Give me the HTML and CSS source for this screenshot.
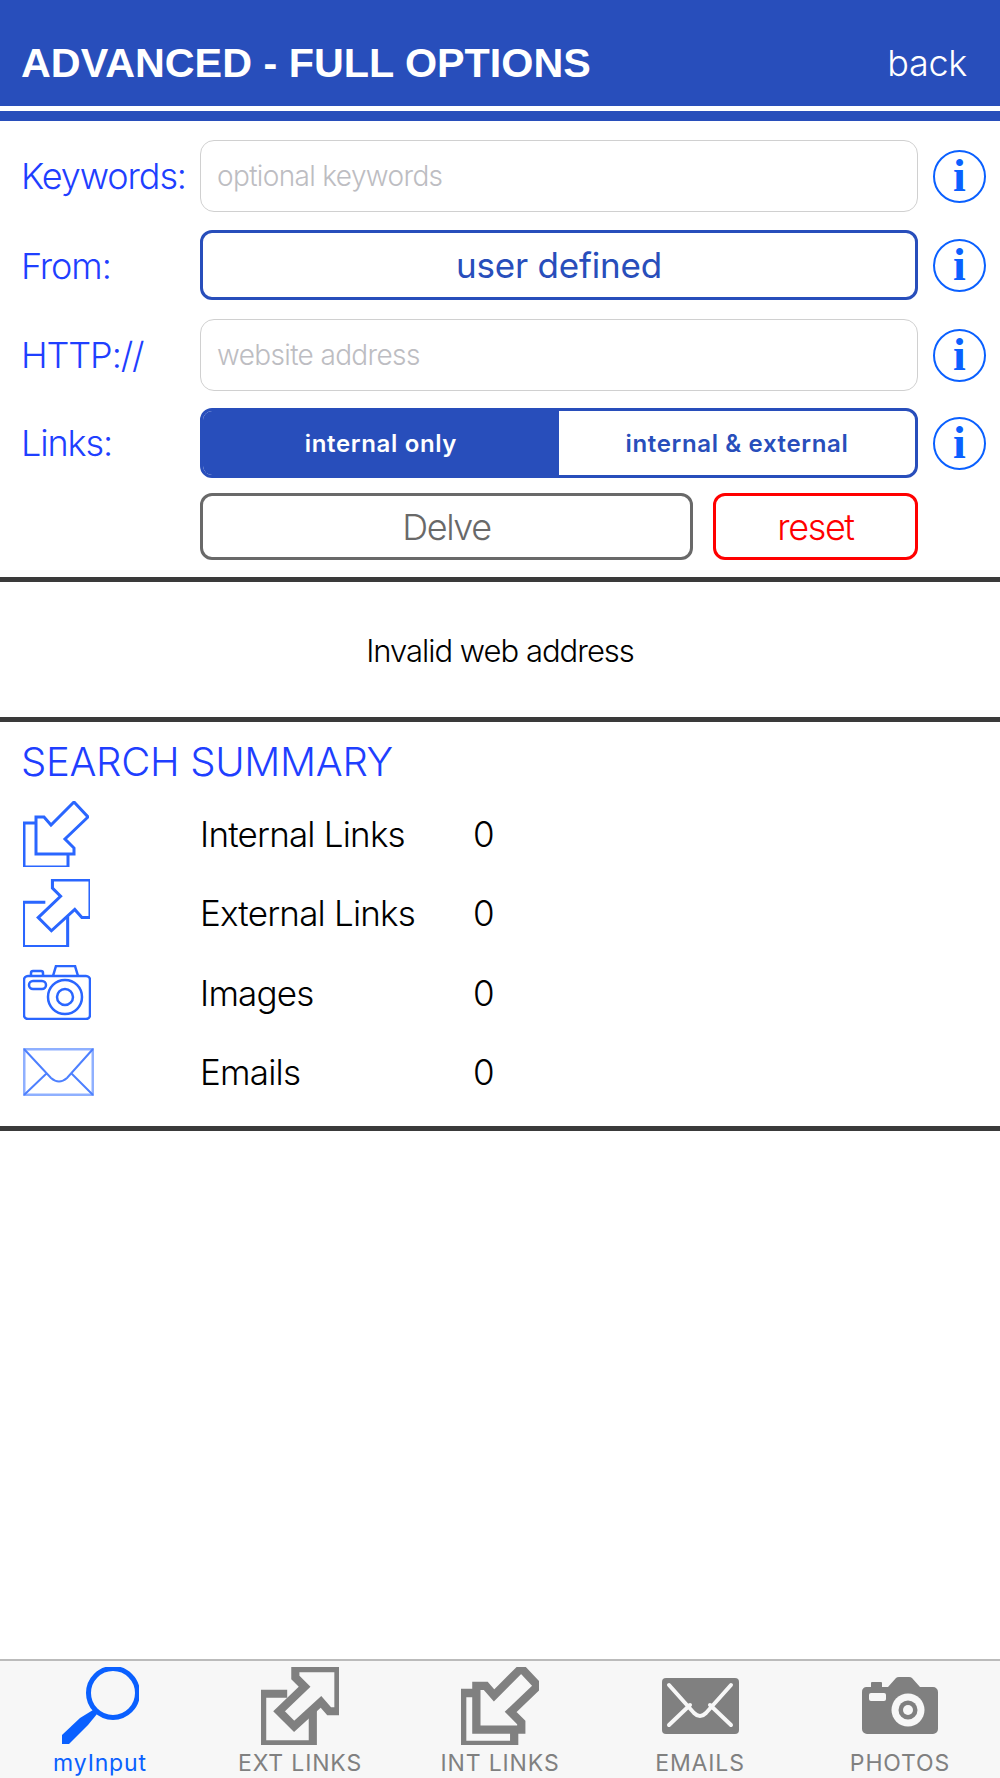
FILE: index.html
```html
<!DOCTYPE html>
<html lang="en">
<head>
  <meta charset="UTF-8">
  <meta name="viewport" content="width=device-width, initial-scale=1.0">
  <title>Advanced - Full Options</title>
  <link rel="stylesheet" href="styles.css">
</head>
<body>
  <svg class="defs" width="0" height="0">
    <symbol id="int-arrow" viewBox="0 0 66 66">
      <path d="M51 1 L65 16 L42 38 L51 47 L51 53 L13 53 L13 16 L21 16 L28 24 Z"/>
      <path d="M13 22 L1 22 L1 66 L45 66 L45 53"/>
    </symbol>
    <symbol id="ext-arrow" viewBox="0 0 66 67">
      <path d="M29 1 L66 1 L66 38 L58 38 L51 30 L28 51 L15 38 L37 17 L29 9 Z"/>
      <path d="M22 23 L0.5 23 L0.5 66.5 L44 66.5 L44 37"/>
    </symbol>
  </svg>

  <header class="topbar">
    <h1>ADVANCED - FULL OPTIONS</h1>
    <span class="back">back</span>
  </header>
  <div class="topbar-line"></div>

  <section class="form">
    <div class="row row-input">
      <label>Keywords:</label>
      <input type="text" class="field field-big" placeholder="optional keywords">
      <span class="info">i</span>
    </div>
    <div class="row row-from">
      <label>From:</label>
      <div class="select">user defined</div>
      <span class="info">i</span>
    </div>
    <div class="row row-input row-http">
      <label>HTTP://</label>
      <input type="text" class="field" placeholder="website address">
      <span class="info">i</span>
    </div>
    <div class="row row-links">
      <label>Links:</label>
      <div class="segment">
        <div class="seg seg-on">internal only</div>
        <div class="seg">internal &amp; external</div>
      </div>
      <span class="info">i</span>
    </div>
    <div class="row row-actions">
      <label></label>
      <div class="actions">
        <div class="btn btn-delve">Delve</div>
        <div class="btn btn-reset">reset</div>
      </div>
    </div>
  </section>

  <section class="message">Invalid web address</section>

  <section class="summary">
    <h2>SEARCH SUMMARY</h2>
    <div class="stat">
      <div class="stat-icon"><svg class="line-icon" width="66" height="66"><use href="#int-arrow"/></svg></div>
      <span class="stat-name">Internal Links</span>
      <span>0</span>
    </div>
    <div class="stat">
      <div class="stat-icon"><svg class="line-icon" width="67" height="68"><use href="#ext-arrow"/></svg></div>
      <span class="stat-name">External Links</span>
      <span>0</span>
    </div>
    <div class="stat">
      <div class="stat-icon">
        <svg class="line-icon thin" width="68" height="55" viewBox="0 0 68 55">
          <path d="M5 11 H63 a4 4 0 0 1 4 4 V50 a4 4 0 0 1 -4 4 H5 a4 4 0 0 1 -4 -4 V15 a4 4 0 0 1 4 -4 Z"/>
          <path d="M30 11 L33 1 H52 L55 11"/>
          <path d="M8 11 V8 a2 2 0 0 1 2 -2 H18 a2 2 0 0 1 2 2 V11"/>
          <rect x="6" y="16" width="17" height="8" rx="4"/>
          <circle cx="42" cy="32" r="17"/>
          <circle cx="42" cy="32" r="8"/>
        </svg>
      </div>
      <span class="stat-name">Images</span>
      <span>0</span>
    </div>
    <div class="stat">
      <div class="stat-icon">
        <svg class="mail-icon" width="71" height="48" viewBox="0 0 71 48">
          <rect class="mail-edge" x="1" y="1" width="69" height="46"/>
          <path d="M1 1 L28 30 Q36 37 44 30 L70 1 M24 25 L1 47 M48 25 L70 47"/>
        </svg>
      </div>
      <span class="stat-name">Emails</span>
      <span>0</span>
    </div>
  </section>

  <div class="spacer"></div>

  <nav class="tabbar">
    <div class="tab tab-on">
      <svg class="tab-icon" width="78" height="78" viewBox="0 0 78 78">
        <circle cx="52" cy="26" r="24.5" fill="none" stroke="#0a60ff" stroke-width="5"/>
        <path d="M32 43 L36 47 L27 58 L8 77 L1 77 L1 68 L19 51 Z" fill="#0a60ff"/>
      </svg>
      <span>myInput</span>
    </div>
    <div class="tab">
      <svg class="line-icon grey" width="78" height="78"><use href="#ext-arrow"/></svg>
      <span>EXT LINKS</span>
    </div>
    <div class="tab">
      <svg class="line-icon grey" width="78" height="78"><use href="#int-arrow"/></svg>
      <span>INT LINKS</span>
    </div>
    <div class="tab">
      <svg class="tab-icon" width="78" height="78" viewBox="0 0 78 78">
        <rect x="1" y="11" width="77" height="56" rx="4" fill="#808080"/>
        <path d="M8 18 L33 46 Q39 52 45 46 L70 18 M29 38 L8 58 M49 38 L70 58" fill="none" stroke="#f7f7f7" stroke-width="4" stroke-linecap="round"/>
      </svg>
      <span>EMAILS</span>
    </div>
    <div class="tab">
      <svg class="tab-icon" width="78" height="78" viewBox="0 0 78 78">
        <path d="M5 20 H10 V16 Q10 15 11 15 H20 Q21 15 21 16 V20 H27 L35 11 Q36 10 38 10 H48 Q50 10 51 11 L59 20 H72 a5 5 0 0 1 5 5 V62 a5 5 0 0 1 -5 5 H6 a5 5 0 0 1 -5 -5 V25 a5 5 0 0 1 4 -5 Z" fill="#808080"/>
        <rect x="8" y="26" width="17" height="8" rx="2" fill="#f7f7f7"/>
        <circle cx="47" cy="43" r="16.5" fill="#f7f7f7"/>
        <circle cx="47" cy="43" r="9.5" fill="#808080"/>
        <circle cx="47" cy="43" r="5" fill="#f7f7f7"/>
      </svg>
      <span>PHOTOS</span>
    </div>
  </nav>
</body>
</html>
```

FILE: styles.css
```css
* {
  box-sizing: border-box;
}
html, body {
  height: 100%;
}
body {
  margin: 0;
  background: white;
  display: flex;
  flex-direction: column;
  font-family: Inter, "Liberation Sans", sans-serif;
  font-weight: 300;
  color: black;
}
.defs {
  position: absolute;
}

/* top bar */
.topbar {
  height: 106px;
  background: #284ebb;
  color: white;
  display: flex;
  align-items: flex-start;
  justify-content: space-between;
  padding: 41px 33px 0 21px;
}
.topbar h1 {
  margin: 0;
  font-family: "Liberation Sans", sans-serif;
  font-size: 41.3px;
  line-height: 44px;
  font-weight: bold;
}
.back {
  font-size: 36px;
  line-height: 44px;
  letter-spacing: -0.3px;
}
.topbar-line {
  height: 15px;
  border-top: 5px solid white;
  background: #284ebb;
}

/* form */
.form {
  padding-top: 19px;
  border-bottom: 5px solid #3a3a3a;
  padding-bottom: 17px;
}
.row {
  display: flex;
  align-items: center;
}
.row label {
  width: 200px;
  padding-left: 21px;
  color: #1f3fff;
  font-size: 36px;
  letter-spacing: -1.1px;
  flex-shrink: 0;
}
.row-input {
  height: 72px;
}
.row-from {
  height: 70px;
  margin-top: 18px;
}
.row-from label {
  padding-top: 2px;
}
.row-http {
  margin-top: 19px;
}
.row-links {
  height: 70px;
  margin-top: 17px;
}
.row-actions {
  height: 67px;
  margin-top: 15px;
}
.field {
  width: 718px;
  height: 100%;
  border: 1.5px solid #d0d0d0;
  border-radius: 14px;
  padding: 0 16px;
  outline: none;
  background: white;
  font-family: inherit;
  font-weight: 300;
  font-size: 28px;
  letter-spacing: -0.65px;
}
.field::placeholder {
  color: #bdbdc2;
  opacity: 1;
}
.select {
  width: 718px;
  height: 100%;
  border: 3px solid #284ebb;
  border-radius: 12px;
  color: #284ebb;
  font-size: 35px;
  font-weight: 400;
  letter-spacing: -0.2px;
  display: flex;
  align-items: center;
  justify-content: center;
}
.info {
  width: 53px;
  height: 53px;
  margin-left: 15px;
  border: 2.5px solid #0a60ff;
  border-radius: 50%;
  color: #0a60ff;
  font-family: "Liberation Serif", serif;
  font-weight: bold;
  font-size: 46px;
  line-height: 1;
  display: flex;
  align-items: center;
  justify-content: center;
}
.segment {
  width: 718px;
  height: 100%;
  border: 3px solid #284ebb;
  border-radius: 12px;
  overflow: hidden;
  display: flex;
}
.seg {
  flex: 1;
  color: #284ebb;
  font-size: 24px;
  font-weight: 600;
  letter-spacing: 0.65px;
  display: flex;
  align-items: center;
  justify-content: center;
}
.seg-on {
  background: #284ebb;
  color: white;
}
.actions {
  width: 718px;
  height: 100%;
  display: flex;
  justify-content: space-between;
}
.btn {
  height: 100%;
  border-radius: 12px;
  font-size: 36px;
  letter-spacing: -1.4px;
  display: flex;
  align-items: center;
  justify-content: center;
}
.btn-delve {
  width: 493px;
  border: 3px solid #696969;
  color: #696969;
}
.btn-reset {
  width: 205px;
  border: 3px solid #ff0000;
  color: #ff0000;
}

/* message */
.message {
  height: 140px;
  border-bottom: 5px solid #3a3a3a;
  text-align: center;
  font-size: 31px;
  letter-spacing: -1px;
  padding-top: 50px;
}

/* summary */
.summary {
  border-bottom: 5px solid #3a3a3a;
  padding: 16px 0 14px 21px;
}
.summary h2 {
  margin: 0 0 8px;
  color: #1f3fff;
  font-size: 40px;
  line-height: 48px;
  font-weight: 300;
  letter-spacing: -0.3px;
}
.stat {
  height: 79.5px;
  display: flex;
  align-items: center;
  font-size: 35px;
  letter-spacing: -0.8px;
}
.stat-icon {
  width: 179px;
  padding-left: 2px;
  display: flex;
  align-items: center;
}
.stat-name {
  width: 273px;
}
.line-icon {
  fill: none;
  stroke: #2a66ff;
  stroke-width: 3;
}
.line-icon.thin {
  stroke-width: 2.5;
}
.line-icon.grey {
  stroke: #808080;
  stroke-width: 7;
}
.mail-icon {
  fill: none;
  stroke: #4d80ff;
  stroke-width: 2;
}
.mail-edge {
  stroke: #8fb0ff;
  stroke-width: 3;
}

.spacer {
  flex: 1;
}

/* bottom tabs */
.tabbar {
  height: 119px;
  background: #f7f7f7;
  border-top: 2px solid #bbbbbb;
  display: flex;
}
.tab {
  width: 200px;
  color: #808080;
  font-size: 23px;
  font-weight: 400;
  letter-spacing: 0.85px;
  display: flex;
  flex-direction: column;
  align-items: center;
  padding-top: 6px;
  white-space: nowrap;
}
.tab-on {
  color: #0a60ff;
}
.tab svg {
  flex-shrink: 0;
}
.tab span {
  line-height: 30px;
  margin-top: 3px;
}
```
